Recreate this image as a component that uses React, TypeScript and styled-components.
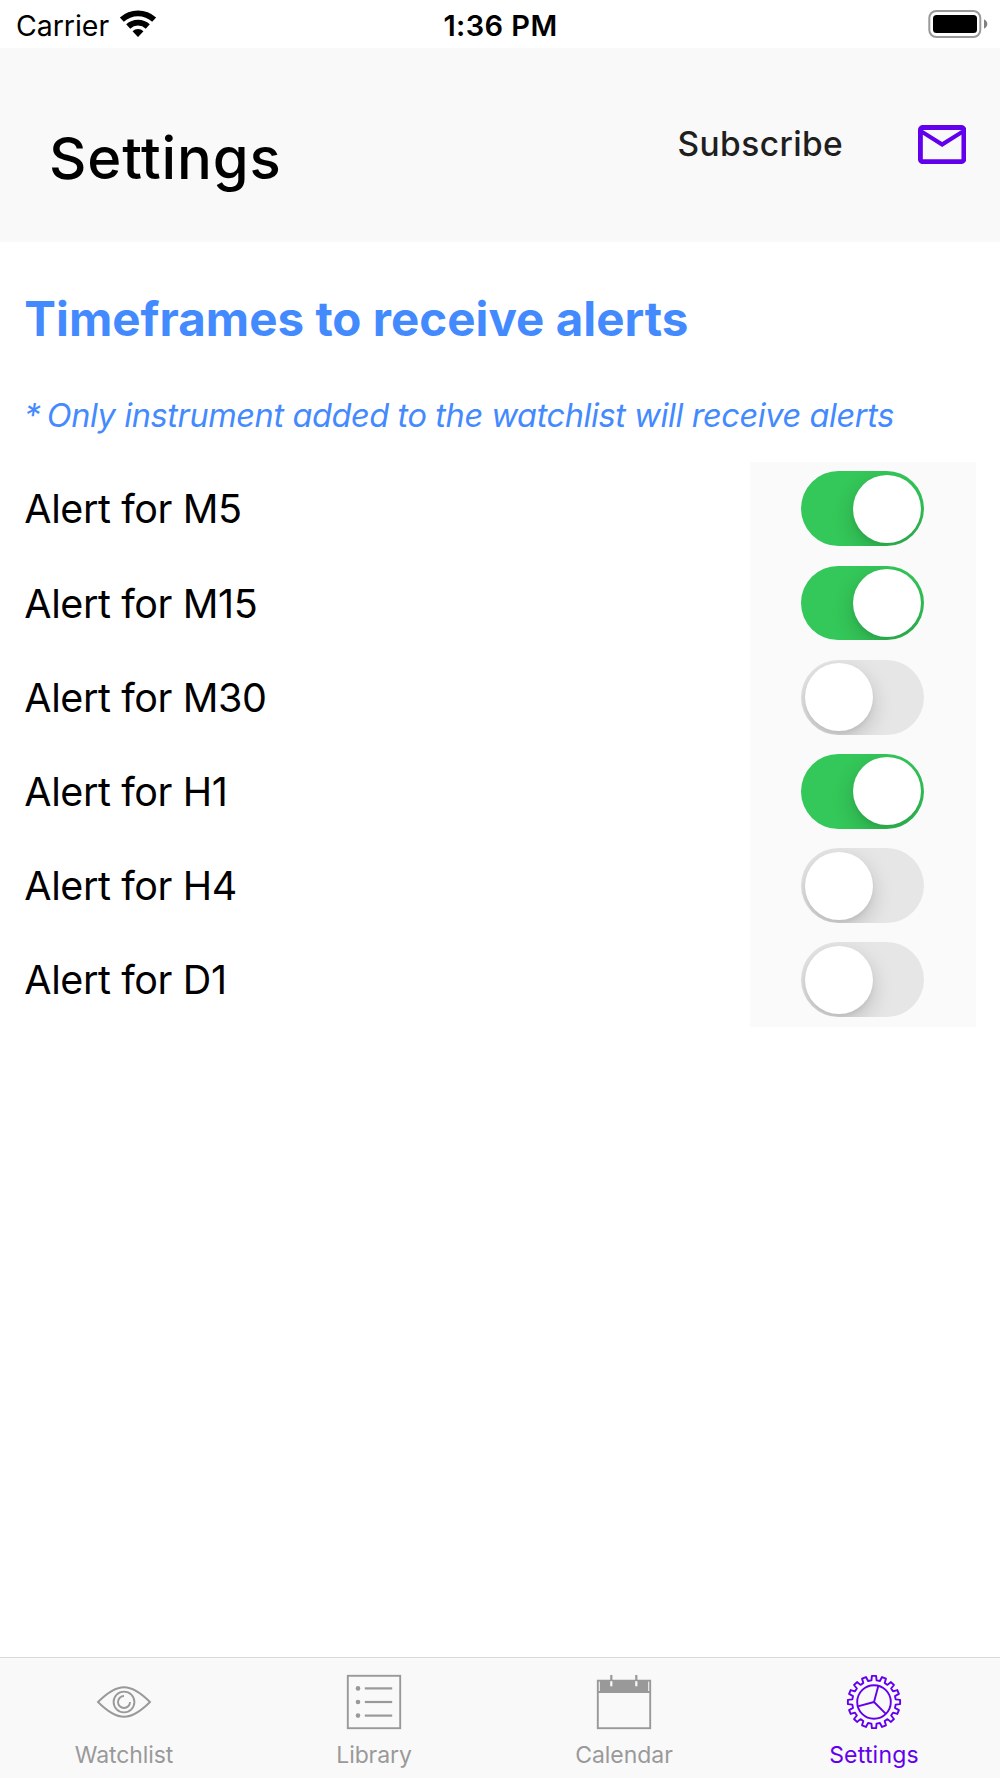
import React, { useState } from "react";
import styled, { createGlobalStyle } from "styled-components";

const PURPLE = "#6200ee";
const BLUE = "#448aff";
const GREY = "#999999";

const GlobalStyle = createGlobalStyle`
  * { box-sizing: border-box; }
  body {
    margin: 0;
    background: #fff;
    color: #000;
    font-family: Inter, "Liberation Sans", sans-serif;
  }
`;

const Screen = styled.div`
  display: flex;
  flex-direction: column;
  width: 1000px;
  height: 1778px;
  overflow: hidden;
  background: #fff;
`;

const StatusBar = styled.div`
  display: grid;
  grid-template-columns: 1fr auto 1fr;
  align-items: center;
  height: 48px;
  padding: 3px 12px 0 16px;
  font-size: 28.5px;
  line-height: 34px;
  white-space: nowrap;
`;

const Carrier = styled.div`
  display: flex;
  align-items: center;
  gap: 10.4px;
  letter-spacing: -0.05px;

  svg { margin-top: -4px; }
`;

const Clock = styled.div`
  margin-left: -3px;
  font-size: 29px;
  font-weight: 600;
  letter-spacing: 0.4px;
`;

const BatterySlot = styled.div`
  display: flex;
  justify-content: flex-end;
  margin-top: -3px;
`;

const Header = styled.header`
  display: flex;
  align-items: center;
  height: 193.5px;
  padding: 0 34px 0 49px;
  background: #f9f9f9;
`;

const Title = styled.h1`
  flex: 1;
  margin: 27px 0 0;
  font-size: 58px;
  line-height: 68px;
  font-weight: 500;
  letter-spacing: 0.8px;
`;

const SubscribeButton = styled.button`
  margin: -1px 74.5px 0 0;
  padding: 0;
  border: 0;
  background: none;
  color: #1f1f1f;
  font: 450 33.5px/40px Inter, "Liberation Sans", sans-serif;
  letter-spacing: 0.4px;
`;

const MailButton = styled.button`
  display: flex;
  margin-top: 0.4px;
  padding: 0;
  border: 0;
  background: none;
  color: ${PURPLE};
`;

const Content = styled.main`
  flex: 1;
  padding: 47px 24.5px 0 24.3px;
`;

const Heading = styled.h2`
  margin: 0;
  color: ${BLUE};
  font-size: 47.5px;
  line-height: 60px;
  font-weight: 700;
  letter-spacing: 0.02px;
  white-space: nowrap;
`;

const Note = styled.p`
  margin: 46.6px 0 0;
  color: ${BLUE};
  font-size: 32.5px;
  line-height: 42px;
  font-style: italic;
  letter-spacing: -0.4px;
  white-space: nowrap;
`;

const Asterisk = styled.span`
  letter-spacing: -2.6px;
`;

const AlertList = styled.div`
  display: flex;
  flex-direction: column;
  margin-top: 24.6px;
`;

const AlertRow = styled.div`
  display: flex;
  align-items: stretch;
  justify-content: space-between;
  height: 94.2px;
`;

const AlertLabel = styled.span`
  display: flex;
  align-items: center;
  padding-top: 1.2px;
  font-size: 39.5px;
  line-height: 48px;
  letter-spacing: -0.4px;
`;

const SwitchCell = styled.div`
  display: flex;
  align-items: center;
  justify-content: center;
  width: 225.5px;
  background: #fafafa;
`;

const Track = styled.button<{ $on: boolean }>`
  display: flex;
  align-items: center;
  justify-content: ${(p) => (p.$on ? "flex-end" : "flex-start")};
  width: 123.3px;
  height: 74.7px;
  padding: 0 3.6px;
  border: 0;
  border-radius: 38px;
  overflow: hidden;
  background: ${(p) => (p.$on ? "#34c759" : "#e6e6e6")};
`;

const Knob = styled.span`
  width: 68px;
  height: 68px;
  border-radius: 50%;
  background: #fff;
  box-shadow: 0 8px 21px rgba(0, 0, 0, 0.18), 0 3px 4px rgba(0, 0, 0, 0.05);
`;

const TabBar = styled.nav`
  display: grid;
  grid-template-columns: repeat(4, 1fr);
  height: 121px;
  border-top: 1.3px solid #d9d9d9;
  background: #f9f9f9;
`;

const Tab = styled.div<{ $active?: boolean }>`
  display: flex;
  flex-direction: column;
  align-items: center;
  padding: 16.4px 2px 0 0;
  color: ${(p) => (p.$active ? PURPLE : GREY)};
`;

const TabLabel = styled.span<{ $spacing: number }>`
  margin-top: 9.4px;
  font-size: 23px;
  line-height: 30px;
  letter-spacing: ${(p) => p.$spacing}px;
`;

const sector = (outer: number, inner: number) => {
  const s = Math.sin((43 * Math.PI) / 180);
  const c = Math.cos((43 * Math.PI) / 180);
  return `M${-outer * s} ${-outer * c}A${outer} ${outer} 0 0 1 ${outer * s} ${-outer * c}L${inner * s} ${-inner * c}A${inner} ${inner} 0 0 0 ${-inner * s} ${-inner * c}Z`;
};

const WifiIcon = () => (
  <svg width="38" height="28" viewBox="-19 -27 38 28">
    <path d={sector(26.6, 20.8)} />
    <path d={sector(17.3, 11.4)} />
    <path d={sector(8, 0.1)} />
  </svg>
);

const BatteryIcon = () => (
  <svg width="60" height="28" viewBox="0 0 60 28">
    <rect x="1.3" y="1" width="51" height="26" rx="7" fill="none" stroke="#999" strokeWidth="2" />
    <rect x="5" y="5" width="44" height="18" rx="3.5" />
    <path d="M56 9.3Q59.3 11 59.3 14T56 18.7Z" fill="#808080" />
  </svg>
);

const MailIcon = () => (
  <svg width="48.3" height="39" viewBox="2 4 20 16" preserveAspectRatio="none" fill="currentColor">
    <path d="M22 6c0-1.1-.9-2-2-2H4c-1.1 0-2 .9-2 2v12c0 1.1.9 2 2 2h16c1.1 0 2-.9 2-2V6zm-2 0l-8 5-8-5h16zm0 12H4V8l8 5 8-5v10z" />
  </svg>
);

const TabSvg = styled.svg.attrs({
  width: 56,
  height: 56,
  viewBox: "-28 -28 56 56",
  fill: "none",
  stroke: "currentColor",
  strokeWidth: 1.9,
})`
  display: block;
`;

const EyeIcon = () => (
  <TabSvg>
    <path d="M-26 0C-17-9-9-14.8 0-14.8S17-9 26 0C17 9 9 14.8 0 14.8S-17 9-26 0Z" />
    <circle r="10.4" />
    <path d="M0-6A6 6 0 1 0 6 0" />
  </TabSvg>
);

const ListIcon = () => (
  <TabSvg>
    <rect x="-26.2" y="-26.2" width="52.4" height="52.4" />
    {[-13.6, 0, 13.6].map((y) => (
      <g key={y}>
        <circle cx="-16" cy={y} r="2.3" fill="currentColor" stroke="none" />
        <path d={`M-9.2 ${y}H18.2`} strokeWidth="2.2" />
      </g>
    ))}
  </TabSvg>
);

const CalendarIcon = () => (
  <TabSvg>
    <rect x="-26.2" y="-21.3" width="52.4" height="47.5" />
    <rect x="-24.2" y="-21.3" width="48.4" height="11.3" fill="currentColor" stroke="none" />
    <path d="M-26-10H26" />
    <path d="M-12.7-27V-21M12.3-27V-21" strokeWidth="2.2" />
    <path d="M-12.7-20.7V-15.7M12.3-20.7V-15.7" stroke="#f9f9f9" strokeWidth="2.2" />
  </TabSvg>
);

const polar = (r: number, deg: number) => {
  const a = (deg * Math.PI) / 180;
  return `${(r * Math.sin(a)).toFixed(2)} ${(-r * Math.cos(a)).toFixed(2)}`;
};

const gearOutline =
  "M" +
  Array.from({ length: 16 }, (_, i) => {
    const a = i * 22.5;
    return [polar(21.8, a - 6.8), polar(26.2, a - 4.6), polar(26.2, a + 4.6), polar(21.8, a + 6.8)].join("L");
  }).join("L") +
  "Z";

const GearIcon = () => (
  <TabSvg>
    <path d={gearOutline} strokeLinejoin="round" />
    <circle r="16.8" />
    <path d={[15, 135, 255].map((a) => `M0 0L${polar(16.8, a)}`).join("")} />
  </TabSvg>
);

const initialAlerts = [
  { name: "M5", on: true },
  { name: "M15", on: true },
  { name: "M30", on: false },
  { name: "H1", on: true },
  { name: "H4", on: false },
  { name: "D1", on: false },
];

const tabs = [
  { label: "Watchlist", Icon: EyeIcon, spacing: -0.1 },
  { label: "Library", Icon: ListIcon, spacing: -0.1 },
  { label: "Calendar", Icon: CalendarIcon, spacing: -0.05 },
  { label: "Settings", Icon: GearIcon, spacing: 0.2 },
];

export default function App() {
  const [alerts, setAlerts] = useState(initialAlerts);
  const toggle = (name: string) =>
    setAlerts((list) => list.map((a) => (a.name === name ? { ...a, on: !a.on } : a)));

  return (
    <Screen>
      <GlobalStyle />
      <StatusBar>
        <Carrier>
          <span>Carrier</span>
          <WifiIcon />
        </Carrier>
        <Clock>1:36 PM</Clock>
        <BatterySlot>
          <BatteryIcon />
        </BatterySlot>
      </StatusBar>
      <Header>
        <Title>Settings</Title>
        <SubscribeButton>Subscribe</SubscribeButton>
        <MailButton aria-label="Mail">
          <MailIcon />
        </MailButton>
      </Header>
      <Content>
        <Heading>Timeframes to receive alerts</Heading>
        <Note>
          <Asterisk>*</Asterisk> Only instrument added to the watchlist will receive alerts
        </Note>
        <AlertList>
          {alerts.map((a) => (
            <AlertRow key={a.name}>
              <AlertLabel>Alert for {a.name}</AlertLabel>
              <SwitchCell>
                <Track
                  $on={a.on}
                  role="switch"
                  aria-checked={a.on}
                  aria-label={`Alert for ${a.name}`}
                  onClick={() => toggle(a.name)}
                >
                  <Knob />
                </Track>
              </SwitchCell>
            </AlertRow>
          ))}
        </AlertList>
      </Content>
      <TabBar>
        {tabs.map(({ label, Icon, spacing }) => (
          <Tab key={label} $active={label === "Settings"}>
            <Icon />
            <TabLabel $spacing={spacing}>{label}</TabLabel>
          </Tab>
        ))}
      </TabBar>
    </Screen>
  );
}
